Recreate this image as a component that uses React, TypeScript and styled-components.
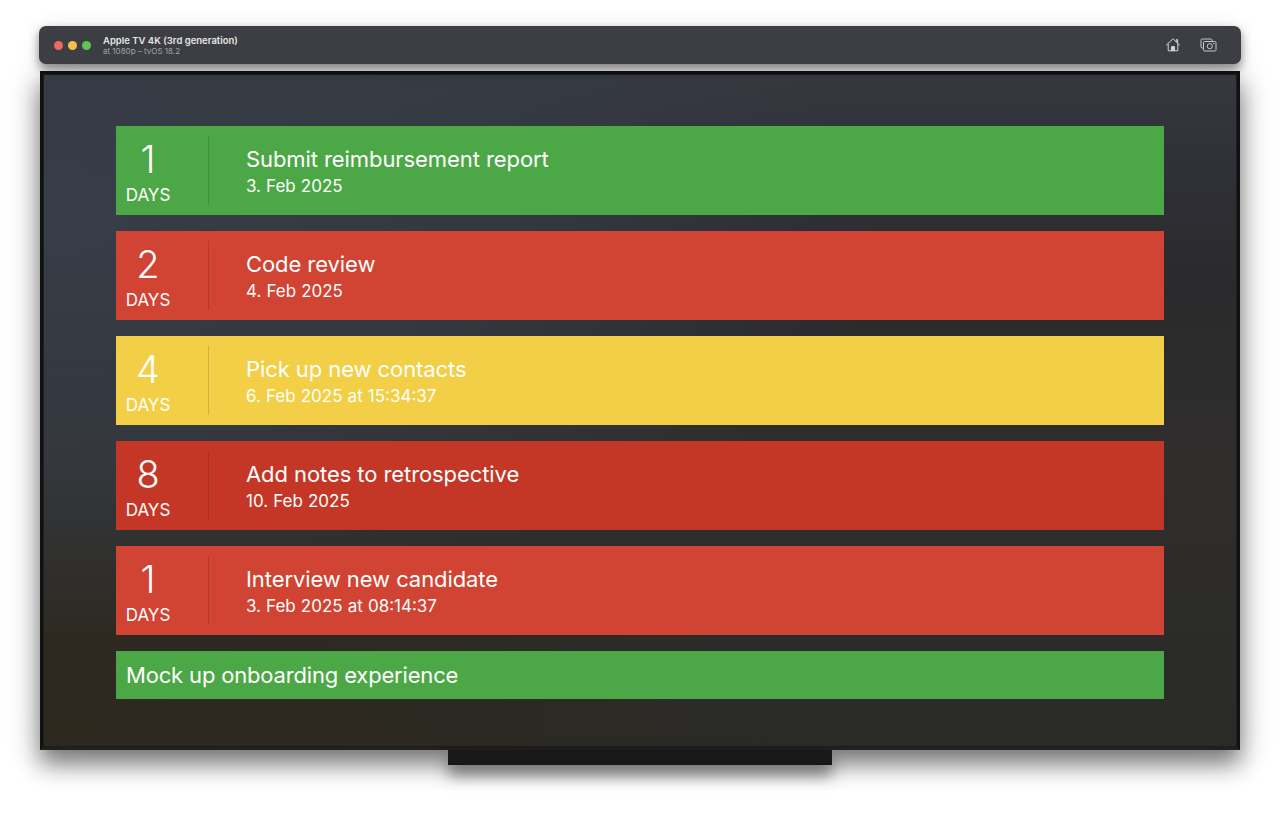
import React from 'react';
import styled, { createGlobalStyle } from 'styled-components';

const GlobalStyle = createGlobalStyle`
  html, body {
    margin: 0;
    padding: 0;
    background: #fff;
    font-family: Inter, "Liberation Sans", sans-serif;
    overflow: hidden;
  }
`;

const Page = styled.div`
  width: 1280px;
  height: 819px;
  padding-top: 26px;
  box-sizing: border-box;
  display: flex;
  flex-direction: column;
  align-items: center;
  overflow: hidden;
`;

const TitleBar = styled.header`
  width: 1202px;
  height: 38px;
  box-sizing: border-box;
  padding: 0 24px 0 15px;
  display: flex;
  align-items: center;
  background: #3d3e43;
  border-radius: 7px;
  box-shadow: 0 5px 10px rgba(0, 0, 0, 0.42), 0 2px 20px rgba(0, 0, 0, 0.1);
  position: relative;
  z-index: 1;
`;

const Lights = styled.div`
  display: flex;
  gap: 5px;
  margin-right: 12px;
`;

const Light = styled.span<{ $color: string }>`
  width: 9px;
  height: 9px;
  border-radius: 50%;
  background: ${(props) => props.$color};
`;

const DeviceInfo = styled.div`
  display: flex;
  flex-direction: column;
  flex: 1;
  margin-top: 1px;
`;

const DeviceName = styled.span`
  font-size: 9.5px;
  line-height: 10px;
  font-weight: 600;
  color: #e6e6e8;
`;

const DeviceOs = styled.span`
  font-size: 8px;
  line-height: 10px;
  color: #a2a3a7;
`;

const ToolIcons = styled.div`
  display: flex;
  align-items: center;
  gap: 19px;
`;

const Screen = styled.main`
  width: 1200px;
  height: 679px;
  margin-top: 7px;
  box-sizing: border-box;
  border: 3px solid #121213;
  border-bottom-color: #202020;
  padding: 52px 73px 0;
  display: flex;
  flex-direction: column;
  gap: 16px;
  background:
    radial-gradient(ellipse 70% 62% at 0% 22%, rgba(56, 62, 72, 0.95) 0%, rgba(54, 60, 70, 0.7) 55%, rgba(50, 54, 62, 0) 100%),
    radial-gradient(ellipse 60% 50% at 0% 100%, #2e291f 0%, rgba(46, 41, 31, 0.6) 60%, rgba(46, 41, 31, 0) 100%),
    linear-gradient(180deg, #36383f 0%, #31323a 10%, #2a2a2c 32%, #302e2d 58%, #2b2b29 85%, #2a2a27 100%);
  box-shadow: inset 0 0 0 1px #1c1c1e, 0 14px 22px rgba(0, 0, 0, 0.48), 0 4px 36px rgba(0, 0, 0, 0.16);
`;

const Row = styled.section<{ $color: string }>`
  height: 89px;
  flex-shrink: 0;
  display: flex;
  align-items: center;
  background: ${(props) => props.$color};
  color: #fff;
`;

const CountBox = styled.div`
  width: 93px;
  height: 69px;
  box-sizing: border-box;
  padding-left: 10px;
  border-right: 1px solid rgba(0, 0, 0, 0.14);
  flex-shrink: 0;
`;

const CountInner = styled.div`
  width: 44px;
  display: flex;
  flex-direction: column;
  align-items: center;
`;

const Count = styled.span`
  font-size: 38px;
  line-height: 46px;
  font-weight: 300;
`;

const CountLabel = styled.span`
  font-size: 17px;
  line-height: 22px;
  margin-top: 2px;
`;

const Body = styled.div`
  margin-left: 37px;
  display: flex;
  flex-direction: column;
`;

const Title = styled.span`
  font-size: 22px;
  line-height: 30px;
  margin-top: -1px;
  font-weight: 400;
  letter-spacing: -0.08px;
`;

const DateText = styled.span`
  font-size: 17px;
  line-height: 22px;
  margin-top: 1px;
  word-spacing: 0.3px;
`;

const HeaderRow = styled.section`
  height: 48px;
  flex-shrink: 0;
  display: flex;
  align-items: center;
  padding-left: 10px;
  background: #4ca846;
  color: #fff;
  font-size: 22px;
  letter-spacing: -0.17px;
`;

const Stand = styled.div`
  width: 384px;
  height: 15px;
  flex-shrink: 0;
  background: #181818;
  box-shadow: 0 10px 16px rgba(0, 0, 0, 0.5);
  position: relative;
`;

const HomeIcon = () => (
  <svg width="16" height="16" viewBox="0 0 16 16" fill="none" stroke="#d4d4d6" strokeWidth="1" strokeLinejoin="round" strokeLinecap="round">
    <path d="M1.5 8 8 1.8 14.5 8" />
    <path d="M11.3 4.6V2.6h1.4v3.2" />
    <path d="M3.2 7v6.8h9.6V7" />
    <path d="M6.5 13.8V9.6h3v4.2" fill="#d4d4d6" />
  </svg>
);

const CameraIcon = () => (
  <svg width="17" height="16" viewBox="0 0 17 16" fill="none" stroke="#c8c8cb" strokeWidth="1" strokeLinejoin="round">
    <path d="M3 11H2.2A1.2 1.2 0 0 1 1 9.8V3.2A1.2 1.2 0 0 1 2.2 2h8.6A1.2 1.2 0 0 1 12 3.2V4" />
    <rect x="3.5" y="4.5" width="12.5" height="9.5" rx="1.3" fill="#3d3e43" />
    <circle cx="9.8" cy="9.2" r="2.6" />
    <circle cx="13.8" cy="6.5" r="0.35" />
  </svg>
);

const items = [
  { count: 1, title: 'Submit reimbursement report', date: '3. Feb 2025', color: '#4ca846' },
  { count: 2, title: 'Code review', date: '4. Feb 2025', color: '#d14332' },
  { count: 4, title: 'Pick up new contacts', date: '6. Feb 2025 at 15:34:37', color: '#f2cf46' },
  { count: 8, title: 'Add notes to retrospective', date: '10. Feb 2025', color: '#c43727' },
  { count: 1, title: 'Interview new candidate', date: '3. Feb 2025 at 08:14:37', color: '#d14332' },
];

export default function App() {
  return (
    <Page>
      <GlobalStyle />
      <TitleBar>
        <Lights>
          <Light $color="#ed6a5e" />
          <Light $color="#f4bf4f" />
          <Light $color="#61c554" />
        </Lights>
        <DeviceInfo>
          <DeviceName>Apple TV 4K (3rd generation)</DeviceName>
          <DeviceOs>at 1080p – tvOS 18.2</DeviceOs>
        </DeviceInfo>
        <ToolIcons>
          <HomeIcon />
          <CameraIcon />
        </ToolIcons>
      </TitleBar>
      <Screen>
        {items.map((item, index) => (
          <Row key={index} $color={item.color}>
            <CountBox>
              <CountInner>
                <Count>{item.count}</Count>
                <CountLabel>DAYS</CountLabel>
              </CountInner>
            </CountBox>
            <Body>
              <Title>{item.title}</Title>
              <DateText>{item.date}</DateText>
            </Body>
          </Row>
        ))}
        <HeaderRow>Mock up onboarding experience</HeaderRow>
      </Screen>
      <Stand />
    </Page>
  );
}
